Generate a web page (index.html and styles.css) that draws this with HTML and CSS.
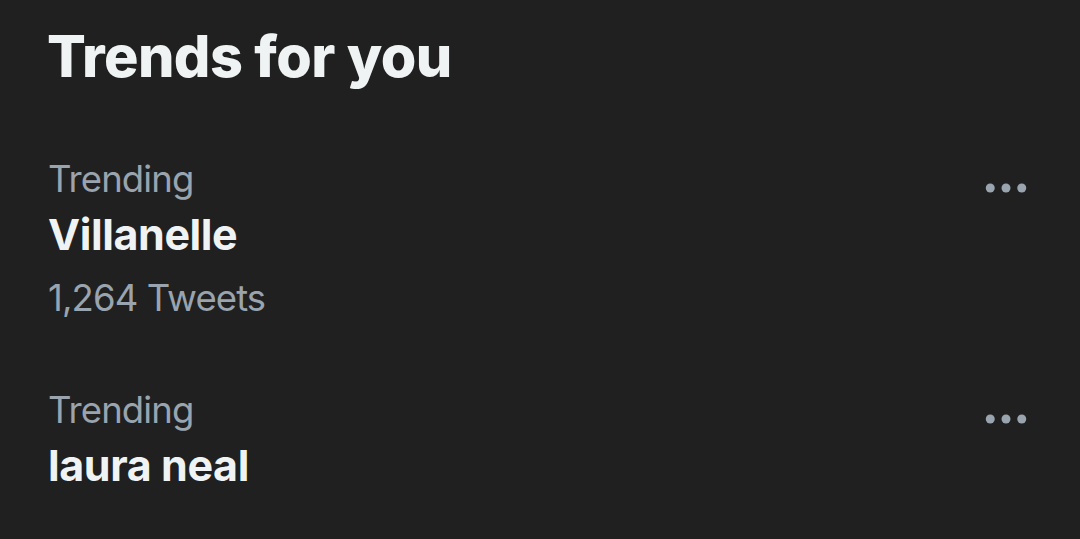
FILE: index.html
```html
<!DOCTYPE html>
<html>
<head>
<meta charset="utf-8">
<link rel="stylesheet" href="styles.css">
</head>
<body>
<section class="trends">
  <h2 class="title">Trends for you</h2>
  <div class="trend">
    <div class="info">
      <div class="meta">Trending</div>
      <div class="name">Villanelle</div>
      <div class="count">1,264 Tweets</div>
    </div>
    <div class="more" aria-label="More">
      <svg viewBox="0 0 24 24" width="54" height="54"><g fill="currentColor"><circle cx="5" cy="12" r="2"/><circle cx="12" cy="12" r="2"/><circle cx="19" cy="12" r="2"/></g></svg>
    </div>
  </div>
  <div class="trend">
    <div class="info">
      <div class="meta">Trending</div>
      <div class="name">laura neal</div>
    </div>
    <div class="more" aria-label="More">
      <svg viewBox="0 0 24 24" width="54" height="54"><g fill="currentColor"><circle cx="5" cy="12" r="2"/><circle cx="12" cy="12" r="2"/><circle cx="19" cy="12" r="2"/></g></svg>
    </div>
  </div>
</section>
</body>
</html>
```
FILE: styles.css
```css
html, body {
  margin: 0;
  padding: 0;
  background: #202020;
  height: 100%;
  overflow: hidden;
}
body {
  font-family: Inter, "Noto Sans", sans-serif;
  color: #eff3f4;
}
.trends {
  display: flex;
  flex-direction: column;
}
.title {
  margin: 0;
  padding: 22px 46px 30px 47px;
  font-size: 57.5px;
  line-height: 69px;
  font-weight: 800;
  letter-spacing: -0.6px;
}
.trend {
  display: flex;
  justify-content: space-between;
  align-items: flex-start;
  padding: 34.5px 46px 31px 48px;
}
.info {
  display: flex;
  flex-direction: column;
}
.meta, .count {
  font-size: 36.5px;
  line-height: 46px;
  color: #99a4ae;
  letter-spacing: -0.9px;
}
.count {
  margin-top: 12px;
}
.name {
  margin-top: 4px;
  font-size: 43px;
  line-height: 57.5px;
  font-weight: 700;
  letter-spacing: -0.4px;
}
.more {
  color: #99a4ae;
  width: 54px;
  height: 54px;
  margin-top: 5px;
  margin-right: 1px;
}
.more svg {
  display: block;
}
```
